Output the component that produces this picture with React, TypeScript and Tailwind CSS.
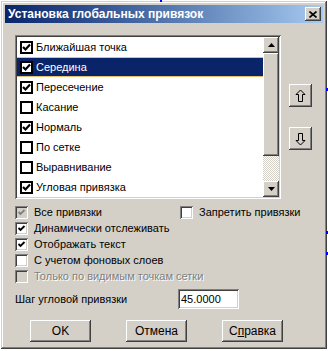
import React from "react";

const FONT = { fontFamily: '"Liberation Sans", Arial, sans-serif' };

function ListCheck({ checked }: { checked: boolean }) {
  return (
    <div className="w-[13px] h-[13px] border-2 border-black bg-white flex items-center justify-center shrink-0">
      {checked && (
        <svg width="9" height="9" viewBox="0 0 9 9">
          <path d="M1 4 L3.5 6.5 L8 1.5" stroke="#000" strokeWidth="2.2" fill="none" />
        </svg>
      )}
    </div>
  );
}

function Check3D({ checked, disabled }: { checked: boolean; disabled?: boolean }) {
  return (
    <div
      className={`w-[13px] h-[13px] shrink-0 flex items-center justify-center ${
        disabled ? "bg-[#d4d0c8]" : "bg-white"
      } shadow-[inset_1px_1px_#808080,inset_-1px_-1px_#ffffff,inset_2px_2px_#404040,inset_-2px_-2px_#d4d0c8]`}
    >
      {checked && (
        <svg width="9" height="9" viewBox="0 0 9 9">
          <path d="M1.5 4 L3.5 6 L7.5 2" stroke={disabled ? "#808080" : "#000"} strokeWidth="1.8" fill="none" />
        </svg>
      )}
    </div>
  );
}

const raised =
  "shadow-[inset_-1px_-1px_#404040,inset_1px_1px_#ffffff,inset_-2px_-2px_#808080,inset_2px_2px_#d4d0c8]";

const items: [string, boolean][] = [
  ["Ближайшая точка", true],
  ["Середина", true],
  ["Пересечение", true],
  ["Касание", false],
  ["Нормаль", true],
  ["По сетке", false],
  ["Выравнивание", false],
  ["Угловая привязка", true],
];

function ScrollBtn({ down }: { down?: boolean }) {
  return (
    <div className={`w-[16px] h-[16px] bg-[#d4d0c8] ${raised} flex items-center justify-center`}>
      <svg width="7" height="4" viewBox="0 0 7 4">
        {down ? <path d="M0 0 H7 L3.5 4 Z" fill="#000" /> : <path d="M0 4 H7 L3.5 0 Z" fill="#000" />}
      </svg>
    </div>
  );
}

function ArrowBtn({ down }: { down?: boolean }) {
  return (
    <div className={`w-[23px] h-[23px] bg-[#d4d0c8] ${raised} flex items-center justify-center`}>
      <svg width="11" height="14" viewBox="0 0 11 14">
        {down ? (
          <path d="M5.5 13 L10 8.5 L7.5 8.5 L7.5 1.5 L3.5 1.5 L3.5 8.5 L1 8.5 Z" stroke="#000" strokeWidth="1" fill="none" />
        ) : (
          <path d="M5.5 1 L10 5.5 L7.5 5.5 L7.5 12.5 L3.5 12.5 L3.5 5.5 L1 5.5 Z" stroke="#000" strokeWidth="1" fill="none" />
        )}
      </svg>
    </div>
  );
}

function Btn({ children }: { children: React.ReactNode }) {
  return (
    <div className={`w-[61px] h-[22px] bg-[#d4d0c8] ${raised} flex items-center justify-center text-[12px] text-black`}>
      {children}
    </div>
  );
}

export default function App() {
  return (
    <div className="w-[328px] h-[351px] bg-white relative overflow-hidden" style={FONT}>
      <div className="absolute left-[160px] top-0 w-[2px] h-[2px] bg-[#0000ff]" />
      <div className="absolute left-[326px] top-[88px] w-[2px] h-[3px] bg-[#0000ff]" />
      <div className="absolute left-[326px] top-[231px] w-[2px] h-[3px] bg-[#0000ff]" />
      <div className="absolute left-[326px] top-[252px] w-[2px] h-[3px] bg-[#0000ff]" />
      <div className="ml-[1px] mt-[1px] w-[326px] h-[348px] bg-[#d4d0c8] p-[4px] flex flex-col shadow-[inset_-1px_-1px_#404040,inset_1px_1px_#d4d0c8,inset_-2px_-2px_#808080,inset_2px_2px_#ffffff]">
        {/* title bar */}
        <div className="h-[18px] bg-gradient-to-r from-[#0a246a] to-[#a6caf0] flex items-center justify-between pl-[3px] pr-[2px]">
          <span className="text-white font-bold text-[12px] leading-none">Установка глобальных привязок</span>
          <div className={`w-[16px] h-[14px] bg-[#d4d0c8] ${raised} flex items-center justify-center`}>
            <svg width="8" height="7" viewBox="0 0 8 7">
              <path d="M0.5 0.5 L7.5 6.5 M7.5 0.5 L0.5 6.5" stroke="#000" strokeWidth="1.6" />
            </svg>
          </div>
        </div>

        {/* list + arrows */}
        <div className="flex mt-[12px] ml-[10px]">
          <div className="w-[266px] h-[164px] p-[2px] bg-white flex shadow-[inset_1px_1px_#808080,inset_-1px_-1px_#ffffff,inset_2px_2px_#404040,inset_-2px_-2px_#d4d0c8]">
            <div className="flex-1 flex flex-col">
              {items.map(([label, checked], i) => (
                <div
                  key={label}
                  className={`h-[20px] flex items-center pl-[3px] gap-[3px] text-[11px] ${
                    i === 1 ? "bg-[#0a246a] text-white border-y border-[#e8c070]" : "text-black"
                  }`}
                >
                  <ListCheck checked={checked} />
                  <span>{label}</span>
                </div>
              ))}
            </div>
            <div className="w-[16px] flex flex-col">
              <ScrollBtn />
              <div className={`h-[103px] bg-[#d4d0c8] ${raised}`} />
              <div className="flex-1 bg-[repeating-conic-gradient(#d4d0c8_0%_25%,#ffffff_0%_50%)] bg-[length:2px_2px]" />
              <ScrollBtn down />
            </div>
          </div>
          <div className="flex flex-col ml-[8px] mt-[49px] gap-[20px]">
            <ArrowBtn />
            <ArrowBtn down />
          </div>
        </div>

        {/* options */}
        <div className="mt-[5px] ml-[10px] flex flex-col text-[11px]">
          <div className="h-[16px] flex items-center">
            <div className="w-[165px] flex items-center gap-[6px]">
              <Check3D checked disabled />
              <span>Все привязки</span>
            </div>
            <div className="flex items-center gap-[6px]">
              <Check3D checked={false} />
              <span>Запретить привязки</span>
            </div>
          </div>
          <div className="h-[16px] flex items-center gap-[6px]">
            <Check3D checked />
            <span>Динамически отслеживать</span>
          </div>
          <div className="h-[16px] flex items-center gap-[6px]">
            <Check3D checked />
            <span>Отображать текст</span>
          </div>
          <div className="h-[16px] flex items-center gap-[6px]">
            <Check3D checked={false} />
            <span>С учетом фоновых слоев</span>
          </div>
          <div className="h-[16px] flex items-center gap-[6px]">
            <Check3D checked={false} disabled />
            <span className="text-[#808080] [text-shadow:1px_1px_#ffffff]">Только по видимым точкам сетки</span>
          </div>
        </div>

        {/* step */}
        <div className="mt-[5px] ml-[10px] flex items-center text-[11px]">
          <span className="w-[163px]">Шаг угловой привязки</span>
          <div className="w-[61px] h-[20px] bg-white flex items-center pl-[3px] shadow-[inset_1px_1px_#808080,inset_-1px_-1px_#ffffff,inset_2px_2px_#404040,inset_-2px_-2px_#d4d0c8]">
            45.0000
          </div>
        </div>

        {/* buttons */}
        <div className="mt-[11px] ml-[25px] flex gap-[35px]">
          <Btn>OK</Btn>
          <Btn>Отмена</Btn>
          <Btn>
            <span>
              С<span className="underline">п</span>равка
            </span>
          </Btn>
        </div>
      </div>
    </div>
  );
}
